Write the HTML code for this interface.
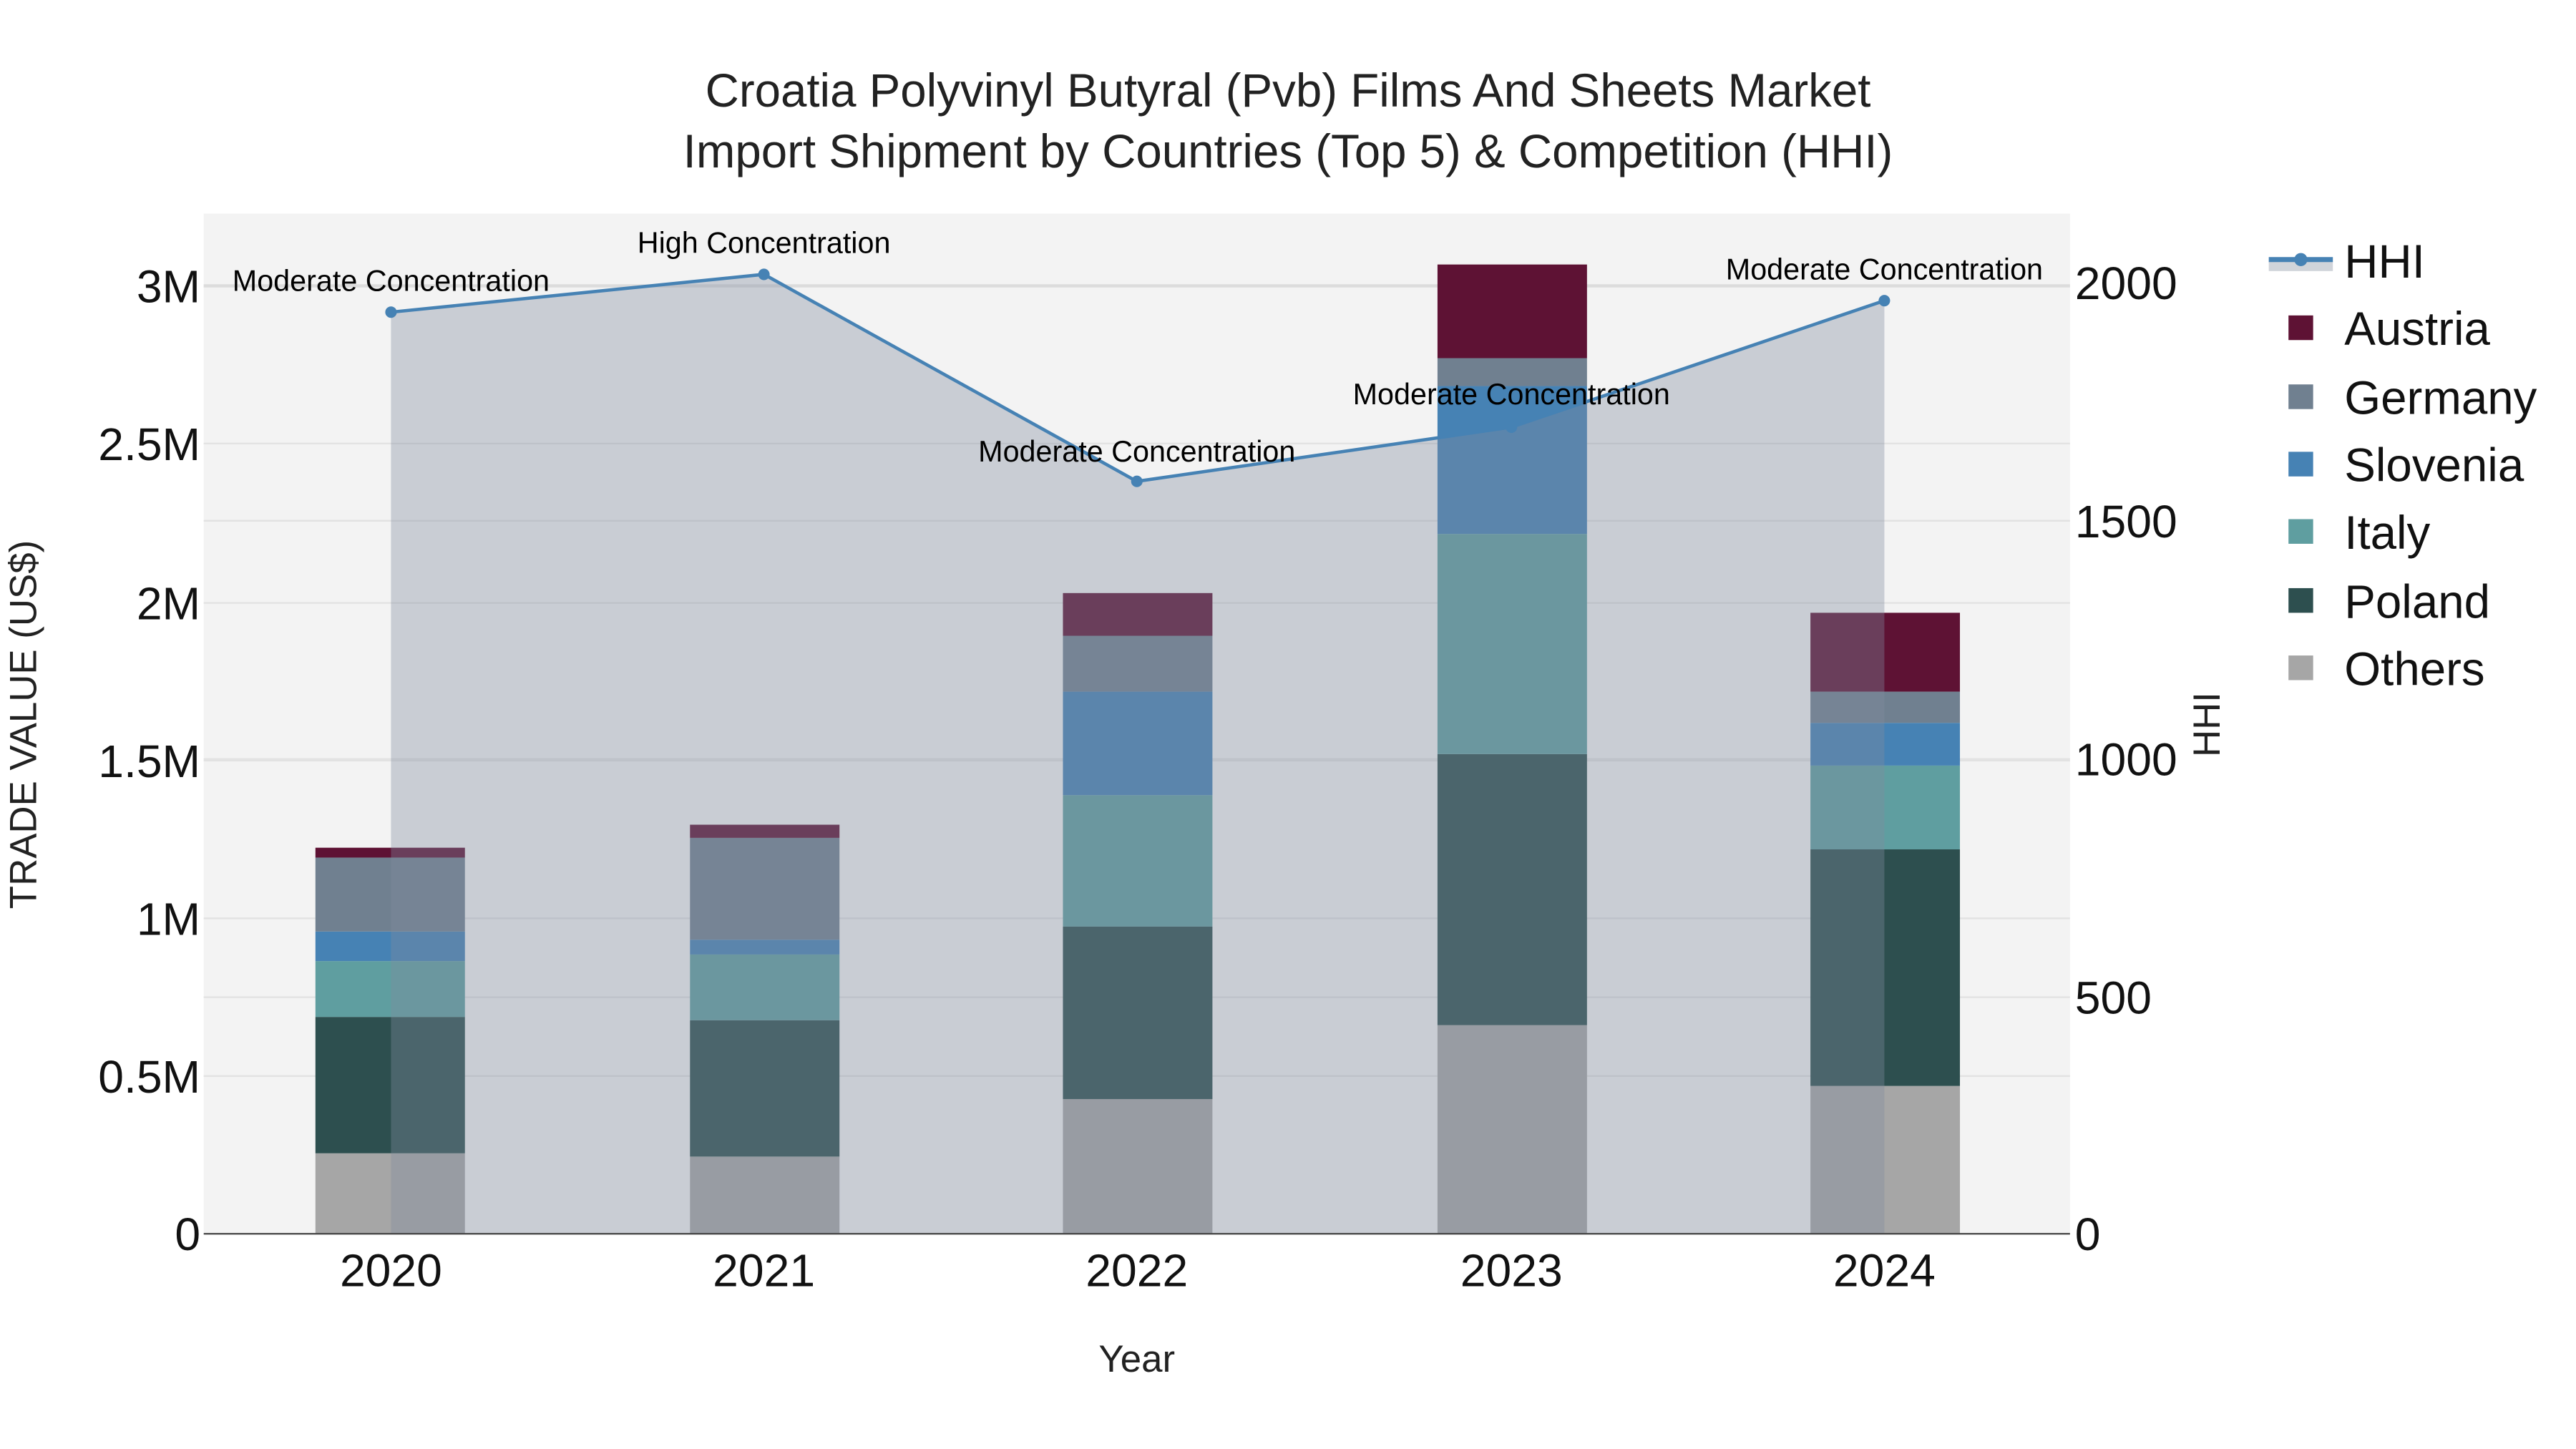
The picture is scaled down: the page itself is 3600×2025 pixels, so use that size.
<!DOCTYPE html>
<html><head><meta charset="utf-8"><style>
html,body{margin:0;padding:0;background:#fff}
svg{display:block}
text{font-family:"Liberation Sans",sans-serif}
</style></head><body>
<svg width="3600" height="2025" viewBox="0 0 1568 882" preserveAspectRatio="none" xmlns="http://www.w3.org/2000/svg">
<rect x="0" y="0" width="1568" height="882" fill="#fff"/>
<rect x="124" y="130" width="1136" height="621" fill="#f3f3f3"/>
<g stroke="#e2e2e2" stroke-width="1">
<line x1="124" x2="1260" y1="655" y2="655"/><line x1="124" x2="1260" y1="559" y2="559"/>
<line x1="124" x2="1260" y1="463" y2="463"/><line x1="124" x2="1260" y1="367" y2="367"/>
<line x1="124" x2="1260" y1="270" y2="270"/>
<line x1="124" x2="1260" y1="607" y2="607"/><line x1="124" x2="1260" y1="462" y2="462"/>
<line x1="124" x2="1260" y1="317" y2="317"/>
</g>
<line x1="124" x2="1260" y1="174" y2="174" stroke="#dcdcdc" stroke-width="2"/>
<g>
<rect x="192" width="91" y="702" height="49" fill="#a6a6a6"/>
<rect x="192" width="91" y="619" height="83" fill="#2d4f4f"/>
<rect x="192" width="91" y="585" height="34" fill="#5f9ea0"/>
<rect x="192" width="91" y="567" height="18" fill="#4682b4"/>
<rect x="192" width="91" y="522" height="45" fill="#708090"/>
<rect x="192" width="91" y="516" height="6" fill="#5e1234"/>
<rect x="420" width="91" y="704" height="47" fill="#a6a6a6"/>
<rect x="420" width="91" y="621" height="83" fill="#2d4f4f"/>
<rect x="420" width="91" y="581" height="40" fill="#5f9ea0"/>
<rect x="420" width="91" y="572" height="9" fill="#4682b4"/>
<rect x="420" width="91" y="510" height="62" fill="#708090"/>
<rect x="420" width="91" y="502" height="8" fill="#5e1234"/>
<rect x="647" width="91" y="669" height="82" fill="#a6a6a6"/>
<rect x="647" width="91" y="564" height="105" fill="#2d4f4f"/>
<rect x="647" width="91" y="484" height="80" fill="#5f9ea0"/>
<rect x="647" width="91" y="421" height="63" fill="#4682b4"/>
<rect x="647" width="91" y="387" height="34" fill="#708090"/>
<rect x="647" width="91" y="361" height="26" fill="#5e1234"/>
<rect x="875" width="91" y="624" height="127" fill="#a6a6a6"/>
<rect x="875" width="91" y="459" height="165" fill="#2d4f4f"/>
<rect x="875" width="91" y="325" height="134" fill="#5f9ea0"/>
<rect x="875" width="91" y="235" height="90" fill="#4682b4"/>
<rect x="875" width="91" y="218" height="17" fill="#708090"/>
<rect x="875" width="91" y="161" height="57" fill="#5e1234"/>
<rect x="1102" width="91" y="661" height="90" fill="#a6a6a6"/>
<rect x="1102" width="91" y="517" height="144" fill="#2d4f4f"/>
<rect x="1102" width="91" y="466" height="51" fill="#5f9ea0"/>
<rect x="1102" width="91" y="440" height="26" fill="#4682b4"/>
<rect x="1102" width="91" y="421" height="19" fill="#708090"/>
<rect x="1102" width="91" y="373" height="48" fill="#5e1234"/>
</g>
<polygon points="238,751 238,190 465,167 692,293 920,260 1147,183 1147,751" fill="rgb(128,139,158)" fill-opacity="0.364"/>
<polyline points="238,190 465,167 692,293 920,260 1147,183" fill="none" stroke="#4682b4" stroke-width="2"/>
<g fill="#4682b4"><circle cx="238" cy="190" r="3.5"/><circle cx="465" cy="167" r="3.5"/><circle cx="692" cy="293" r="3.5"/><circle cx="920" cy="260" r="3.5"/><circle cx="1147" cy="183" r="3.5"/></g>
<g font-size="18" fill="#000" text-anchor="middle">
<text x="238" y="177">Moderate Concentration</text>
<text x="465" y="154">High Concentration</text>
<text x="692" y="281">Moderate Concentration</text>
<text x="920" y="246">Moderate Concentration</text>
<text x="1147" y="170">Moderate Concentration</text>
</g>
<line x1="124" x2="1260" y1="751" y2="751" stroke="#444" stroke-width="1"/>
<g font-size="28" fill="#111" text-anchor="end">
<text x="122" y="761">0</text><text x="122" y="665">0.5M</text><text x="122" y="569">1M</text>
<text x="122" y="473">1.5M</text><text x="122" y="377">2M</text><text x="122" y="280">2.5M</text>
<text x="122" y="184">3M</text>
</g>
<g font-size="28" fill="#111" text-anchor="start">
<text x="1263" y="761">0</text><text x="1263" y="617">500</text><text x="1263" y="472">1000</text>
<text x="1263" y="327">1500</text><text x="1263" y="182">2000</text>
</g>
<g font-size="28" fill="#111" text-anchor="middle">
<text x="238" y="783">2020</text><text x="465" y="783">2021</text><text x="692" y="783">2022</text>
<text x="920" y="783">2023</text><text x="1147" y="783">2024</text>
</g>
<text x="692" y="835" font-size="23" text-anchor="middle" fill="#222">Year</text>
<text transform="translate(22,441) rotate(-90)" font-size="23" text-anchor="middle" fill="#222">TRADE VALUE (US$)</text>
<text transform="translate(1351,441) rotate(-90)" font-size="23" text-anchor="middle" fill="#222">HHI</text>
<g font-size="28.5" fill="#222" text-anchor="middle">
<text x="784" y="65">Croatia Polyvinyl Butyral (Pvb) Films And Sheets Market</text>
<text x="784" y="102">Import Shipment by Countries (Top 5) &amp; Competition (HHI)</text>
</g>
<rect x="1381" y="159" width="39" height="6" fill="#d0d4da"/>
<line x1="1381" x2="1420" y1="158" y2="158" stroke="#4682b4" stroke-width="3"/>
<circle cx="1400.5" cy="158" r="4" fill="#4682b4"/>
<g>
<rect x="1393" y="192" width="15" height="15" fill="#5e1234"/>
<rect x="1393" y="234" width="15" height="15" fill="#708090"/>
<rect x="1393" y="275" width="15" height="15" fill="#4682b4"/>
<rect x="1393" y="316" width="15" height="15" fill="#5f9ea0"/>
<rect x="1393" y="358" width="15" height="15" fill="#2d4f4f"/>
<rect x="1393" y="399" width="15" height="15" fill="#a6a6a6"/>
</g>
<g font-size="28.5" fill="#111">
<text x="1427" y="169">HHI</text><text x="1427" y="210">Austria</text><text x="1427" y="252">Germany</text>
<text x="1427" y="293">Slovenia</text><text x="1427" y="334">Italy</text><text x="1427" y="376">Poland</text>
<text x="1427" y="417">Others</text>
</g>
</svg>
</body></html>
